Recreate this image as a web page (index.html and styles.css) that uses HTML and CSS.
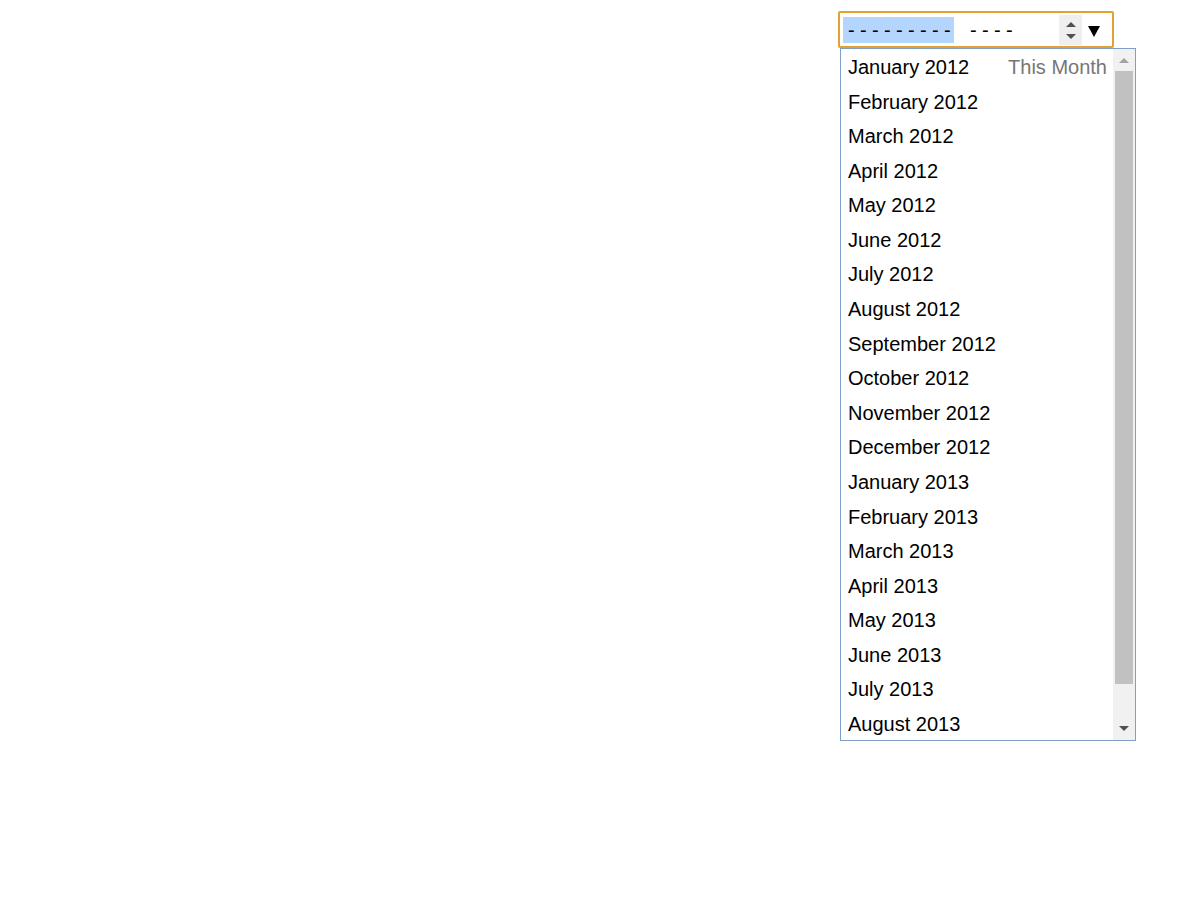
FILE: index.html
```html
<!DOCTYPE html>
<html>
<head>
<meta charset="utf-8">
<link rel="stylesheet" href="styles.css">
</head>
<body>
<div class="widget">
  <div class="field">
    <span class="seg seg-month"><span class="dashes">---------</span></span>
    <span class="seg seg-year"><span class="dashes">----</span></span>
    <span class="spin">
      <svg width="12" height="26" viewBox="0 0 12 26"><path d="M1 10 L6 5 L11 10 Z" fill="#505050"/><path d="M1 17 L11 17 L6 22 Z" fill="#505050"/></svg>
    </span>
    <span class="drop">
      <svg width="12" height="11" viewBox="0 0 12 11"><path d="M0 0 L12 0 L6 11 Z" fill="#000"/></svg>
    </span>
  </div>
  <div class="popup">
    <ul class="list">
      <li class="row"><span>January 2012</span><span class="hint">This Month</span></li>
      <li class="row">February 2012</li>
      <li class="row">March 2012</li>
      <li class="row">April 2012</li>
      <li class="row">May 2012</li>
      <li class="row">June 2012</li>
      <li class="row">July 2012</li>
      <li class="row">August 2012</li>
      <li class="row">September 2012</li>
      <li class="row">October 2012</li>
      <li class="row">November 2012</li>
      <li class="row">December 2012</li>
      <li class="row">January 2013</li>
      <li class="row">February 2013</li>
      <li class="row">March 2013</li>
      <li class="row">April 2013</li>
      <li class="row">May 2013</li>
      <li class="row">June 2013</li>
      <li class="row">July 2013</li>
      <li class="row">August 2013</li>
    </ul>
    <div class="scrollbar">
      <div class="sb-btn"><svg width="10" height="6" viewBox="0 0 10 6"><path d="M0 6 L5 1 L10 6 Z" fill="#a3a3a3"/></svg></div>
      <div class="sb-thumb"></div>
      <div class="sb-track"></div>
      <div class="sb-btn"><svg width="10" height="6" viewBox="0 0 10 6"><path d="M0 0 L10 0 L5 5 Z" fill="#505050"/></svg></div>
    </div>
  </div>
</div>
</body>
</html>
```
FILE: styles.css
```css
html, body {
  margin: 0;
  padding: 0;
  background: #fff;
}
body {
  font-family: "Liberation Sans", Arial, sans-serif;
  font-size: 20px;
  color: #000;
}
.widget {
  margin-left: 838px;
  padding-top: 11px;
  width: 300px;
}
.field {
  box-sizing: border-box;
  width: 276px;
  height: 37px;
  border: 2px solid #e4a131;
  border-radius: 2px;
  display: flex;
  align-items: center;
  padding-left: 3px;
}
.seg {
  display: block;
  box-sizing: border-box;
  height: 26px;
  line-height: 27px;
  font-size: 20px;
  white-space: nowrap;
  flex-shrink: 0;
}
.dashes {
  letter-spacing: 5.34px;
  margin-right: -5.34px;
}
.seg-month {
  width: 111px;
  padding-left: 5px;
  background: #b4d5fe;
}
.seg-year {
  margin-left: 16px;
  width: 89px;
}
.spin {
  width: 23px;
  height: 30px;
  background: #efefef;
  display: flex;
  align-items: center;
  justify-content: center;
  margin-top: 1px;
  flex-shrink: 0;
}
.drop {
  display: flex;
  align-items: center;
  margin-left: 6px;
  padding-top: 4px;
}
.popup {
  box-sizing: border-box;
  margin-left: 2px;
  width: 296px;
  height: 693px;
  border: 1px solid #7f9fc6;
  display: flex;
  background: #fff;
}
.list {
  list-style: none;
  margin: 0;
  padding: 1px 0 0 0;
  flex: 1;
  overflow: hidden;
}
.row {
  height: 34.58px;
  line-height: 34.58px;
  padding-left: 7px;
  padding-right: 6px;
  display: flex;
  justify-content: space-between;
  white-space: nowrap;
}
.hint {
  color: #767676;
}
.scrollbar {
  width: 22px;
  background: #f1f1f1;
  display: flex;
  flex-direction: column;
  align-items: center;
}
.sb-btn {
  height: 22px;
  width: 100%;
  display: flex;
  align-items: center;
  justify-content: center;
}
.sb-thumb {
  flex: 1;
  width: 18px;
  background: #c1c1c1;
}
.sb-track {
  height: 34px;
}
```
